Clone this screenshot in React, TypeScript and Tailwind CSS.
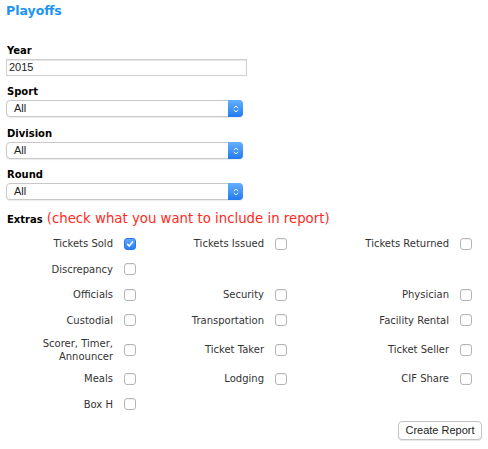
import React from 'react';

const checks: (string | null)[][] = [
  ['Tickets Sold', 'Tickets Issued', 'Tickets Returned'],
  ['Discrepancy', null, null],
  ['Officials', 'Security', 'Physician'],
  ['Custodial', 'Transportation', 'Facility Rental'],
  ['Scorer, Timer, Announcer', 'Ticket Taker', 'Ticket Seller'],
  ['Meals', 'Lodging', 'CIF Share'],
  ['Box H', null, null],
];

function Box({ checked }: { checked?: boolean }) {
  if (checked) {
    return (
      <span className="flex h-[12px] w-[12px] shrink-0 items-center justify-center rounded-[3px] bg-gradient-to-b from-[#5fa8fb] to-[#2a7ff3] border border-[#2a78e4]">
        <svg viewBox="0 0 12 12" className="h-[10px] w-[10px]" fill="none" stroke="white" strokeWidth="1.8" strokeLinecap="round" strokeLinejoin="round">
          <path d="M3 6.3l2 2.2 4-5" />
        </svg>
      </span>
    );
  }
  return <span className="block h-[12px] w-[12px] shrink-0 rounded-[3px] border border-[#b5b5b5] bg-white shadow-[inset_0_1px_1px_rgba(0,0,0,0.06)]" />;
}

function Select() {
  return (
    <div className="flex h-[17px] w-[237px] items-stretch rounded-[4px] border border-[#c8c8c8] bg-white shadow-[0_1px_1px_rgba(0,0,0,0.08)]">
      <span className="flex-1 pl-[7px] text-[11px] leading-[15px] text-[#222] font-['Liberation_Sans',sans-serif]">All</span>
      <span className="flex w-[15px] items-center justify-center rounded-r-[4px] bg-gradient-to-b from-[#64b0fc] to-[#1f7af1] -my-px -mr-px">
        <svg viewBox="0 0 8 12" className="h-[10px] w-[6px]" fill="none" stroke="white" strokeWidth="1.3" strokeLinecap="round" strokeLinejoin="round">
          <path d="M1.5 4.5L4 2l2.5 2.5M1.5 7.5L4 10l2.5-2.5" />
        </svg>
      </span>
    </div>
  );
}

function Label({ children }: { children: React.ReactNode }) {
  return <div className="mb-[2px] pl-[1px] text-[10px] font-bold leading-[12px] text-black">{children}</div>;
}

export default function App() {
  return (
    <div className="min-h-screen bg-white px-[6px] pt-[3px] font-['DejaVu_Sans',sans-serif] text-[#222]">
      <h1 className="text-[12.5px] font-bold leading-[16px] text-[#1b94f3]">Playoffs</h1>

      <div className="mt-[26px]">
        <Label>Year</Label>
        <div className="h-[17px] w-[241px] border border-[#cfcfcf] bg-white shadow-[inset_0_1px_1px_rgba(0,0,0,0.1)] pl-[2px] text-[11px] leading-[15px] font-['Liberation_Sans',sans-serif]">2015</div>
      </div>

      <div className="mt-[10px]">
        <Label>Sport</Label>
        <Select />
      </div>
      <div className="mt-[11px]">
        <Label>Division</Label>
        <Select />
      </div>
      <div className="mt-[10px]">
        <Label>Round</Label>
        <Select />
      </div>

      <div className="mt-[11px] flex items-baseline gap-[4px] pl-[1px] leading-[16px]">
        <span className="text-[10px] font-bold text-black">Extras</span>
        <span className="text-[13.3px] text-[#ff2a1d]">(check what you want to include in report)</span>
      </div>

      <div className="-ml-[6px] mt-[3px] grid grid-cols-[136px_151px_185px] auto-rows-[minmax(25.5px,auto)]">
        {checks.flatMap((row, r) =>
          row.map((label, c) => (
            <div key={`${r}-${c}`} className="flex items-center justify-end gap-[11px] py-[3.5px]">
              {label && (
                <>
                  <span className="text-right text-[10px] leading-[13px] text-[#333]">{label}</span>
                  <Box checked={r === 0 && c === 0} />
                </>
              )}
            </div>
          ))
        )}
      </div>

      <div className="mt-[4px] flex w-[476px] justify-end">
        <button className="h-[19px] w-[84px] rounded-[4px] border border-[#c3c3c3] bg-white text-[11px] leading-[17px] text-[#222] shadow-[0_1px_1px_rgba(0,0,0,0.1)] font-['Liberation_Sans',sans-serif]">
          Create Report
        </button>
      </div>
    </div>
  );
}
